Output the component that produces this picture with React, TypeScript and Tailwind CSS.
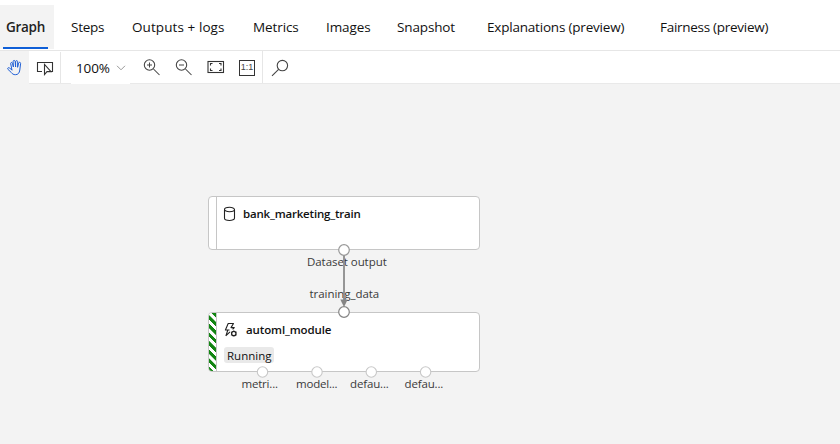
import React from "react";

const tabs = [
  { label: "Steps", box: "w-[61px]", text: "tracking-[-0.25px]" },
  { label: "Outputs + logs", box: "w-[121px]", text: "tracking-[0.08px]" },
  { label: "Metrics", box: "w-[73px]", text: "tracking-[-0.1px]" },
  { label: "Images", box: "w-[71px]", text: "tracking-[-0.1px]" },
  { label: "Snapshot", box: "w-[90px]", text: "tracking-[-0.14px]" },
  { label: "Explanations (preview)", box: "w-[173px]", text: "tracking-[-0.2px]" },
  { label: "Fairness (preview)", box: "w-[130px]", text: "tracking-[-0.28px]" },
];

function Hand() {
  return (
    <svg width="16" height="17" viewBox="0 0 16 17" fill="none" stroke="#1f5fd6" strokeWidth="1" strokeLinecap="round" strokeLinejoin="round">
      <path d="M4.900 10.800L3.700 4.700c-.3-1.400 1.500-1.700 1.800-.4L6.400 8 6.100 2.500c0-1.400 2-1.400 2.100 0L8.600 8V2.600c.1-1.300 2.100-1.300 2.100.1L10.600 8.300l1-4.200c.3-1.300 2.200-.9 2 .4l-.8 6.500c-.4 3-1.700 4.700-4.400 4.700-1.900 0-3-.7-4.100-2.200L.9 10.300c-.8-1.100.5-2.100 1.400-1.400l2.600 2" />
    </svg>
  );
}

function SelectBox() {
  return (
    <svg width="18" height="16" viewBox="0 0 18 16" fill="none" stroke="#333" strokeWidth="1.1">
      <path d="M6 11.500H1.500V2.500H16.500V11.500H14.500" />
      <path d="M8.500 4.500V14.500l2.500-2.900h4z" fill="#fff" />
    </svg>
  );
}

function Magnifier({ sign }: { sign: "plus" | "minus" }) {
  return (
    <svg width="18" height="18" viewBox="0 0 18 18" fill="none" stroke="#444" strokeWidth="1.05">
      <circle cx="6.500" cy="7" r="5.2" />
      <path d="M10.500 11l6 6M4 7h5" />
      {sign === "plus" && <path d="M6.500 4.500v5" />}
    </svg>
  );
}

function Toolbar() {
  return (
    <div className="flex h-[33px] border-b border-[#e9e9e9] bg-white">
      <div className="-mb-px flex w-[29px] items-center bg-[#f3f3f3] pl-[7px]"><Hand /></div>
      <div className="mt-px flex w-8 items-center border-r border-[#e6e6e6] pl-[7px]"><SelectBox /></div>
      <div className="-mb-px ml-[10px] flex w-[59px] items-center bg-white pl-[5px] text-[13.5px] text-[#111]">
        <span className="w-10 pt-[2px] tracking-[-0.15px]">100%</span>
        <svg width="10" height="6" viewBox="0 0 10 6" fill="none" stroke="#999"><path d="M1 .8l4 4 4-4" /></svg>
      </div>
      <div className="flex w-[133px] items-center border-r border-[#e6e6e6] pl-[13px]">
        <div className="w-8"><Magnifier sign="plus" /></div>
        <div className="w-8"><Magnifier sign="minus" /></div>
        <svg className="mr-[14px]" width="18" height="14" viewBox="0 0 18 14" fill="none" stroke="#333" strokeWidth="1.1">
          <rect x="1" y="1.5" width="15.5" height="11" />
          <path d="M3.5 5.5v-2h2M12 3.500h2v2M14 8.5v2h-2M5.5 10.5h-2v-2" />
        </svg>
        <div className="mt-px flex h-4 w-4 shrink-0 items-center justify-center border border-[#333] font-['Liberation_Sans',sans-serif] text-[9px] leading-none text-[#444]">1:1</div>
      </div>
      <div className="flex items-center pl-[8px] pt-px">
        <svg width="18" height="18" viewBox="0 0 18 18" fill="none" stroke="#444" strokeWidth="1.1">
          <circle cx="11.4" cy="6.6" r="5.2" />
          <path d="M7.6 10.4l-6.6 6.4" />
        </svg>
      </div>
    </div>
  );
}

function AutoMlIcon() {
  return (
    <svg width="14" height="16" viewBox="0 0 14 16" fill="none" stroke="#222" strokeWidth="1.1" strokeLinejoin="round">
      <path d="M5.500 8H1.4L4.2 1.5H9.5L7 5.6h3.3L8.6 7.4M3.8 8L2 13.6l4-3.8" />
      <circle cx="9.800" cy="11.500" r="2.200" strokeWidth="1.300" />
      <path d="M9.800 8.400v1M9.800 13.600v1M6.900 9.900l1 .6M11.600 12.500l1.100.6M6.900 13.100l1-.6M11.600 10.500l1.100-.6" strokeWidth="0.700" />
    </svg>
  );
}

const outputs = [
  { label: "metri...", x: 262.5, text: "left-[241.5px] top-[376px] tracking-[-0.2px]" },
  { label: "model...", x: 317, text: "left-[296px] top-[376px] tracking-[-0.2px]" },
  { label: "defau...", x: 371.3, text: "left-[350px] top-[376px] tracking-[-0.15px]" },
  { label: "defau...", x: 425.6, text: "left-[404.5px] top-[376px] tracking-[-0.15px]" },
];

export default function App() {
  return (
    <div className="relative flex h-[444px] w-[840px] flex-col overflow-hidden bg-[#f3f3f3] font-['Open_Sans','Noto_Sans',sans-serif] text-[#111]">
      <nav className="flex h-[51px] shrink-0 border-b border-[#e6e6e6] bg-white pt-[5px] text-[13.5px]">
        <div className="mr-[17px] flex h-11 w-[54px] flex-col bg-[#f3f3f3] pl-[3px]">
          <span className="h-[42px] pl-[3px] font-semibold leading-[45px] tracking-[-0.3px] text-[#222]">Graph</span>
          <span className="h-[2px] w-[45px] bg-[#0f5fd7]" />
        </div>
        {tabs.map((t) => (
          <div key={t.label} className={`${t.box} shrink-0 whitespace-nowrap leading-[45px]`}>
            <span className={t.text}>{t.label}</span>
          </div>
        ))}
      </nav>
      <Toolbar />

      <section className="absolute left-[208px] top-[196px] flex h-[54px] w-[272px] overflow-hidden rounded-[4px] border border-[#c6c6c6] bg-white">
        <div className="w-2 border-r border-[#c6c6c6]" />
        <div className="flex h-[34px] items-center pl-[6px]">
          <svg width="14" height="16" viewBox="0 0 14 16" fill="none" stroke="#222" strokeWidth="1.1">
            <ellipse cx="6.5" cy="3.5" rx="5" ry="2.2" />
            <path d="M1.5 3.5v8.8c0 1.2 2.2 2.2 5 2.2s5-1 5-2.2V3.500" />
          </svg>
          <span className="pl-[6px] text-[11.5px] font-semibold tracking-[-0.19px]">bank_marketing_train</span>
        </div>
      </section>

      <section className="absolute left-[208px] top-[312px] flex h-[60px] w-[272px] overflow-hidden rounded-[4px] border border-[#c6c6c6] bg-white">
        <div className="w-2 border-r border-[#c6c6c6] bg-[repeating-linear-gradient(45deg,#128512_0px,#128512_2.8px,#fff_3.2px,#fff_5.8px,#128512_6.1px)]" />
        <div className="flex flex-col pl-[7px]">
          <div className="flex h-[34px] items-center">
            <AutoMlIcon />
            <span className="pl-2 text-[11.5px] font-semibold tracking-[-0.12px]">automl_module</span>
          </div>
          <span className="flex h-4 w-[50px] items-center rounded-[3px] bg-[#e9e9e9] pl-[3px] pt-[2px] text-[11.5px]">Running</span>
        </div>
      </section>

      <span className="absolute left-[307px] top-[254px] whitespace-nowrap text-[11.5px] leading-4 tracking-[-0.06px] text-[#3a3a3a]">Dataset output</span>
      <span className="absolute left-[309.5px] top-[286px] whitespace-nowrap text-[11.5px] leading-4 tracking-[-0.05px] text-[#3a3a3a]">training_data</span>
      {outputs.map((o, i) => (
        <span key={i} className={`absolute whitespace-nowrap text-[11.5px] leading-4 text-[#3a3a3a] ${o.text}`}>{o.label}</span>
      ))}

      <svg className="absolute left-0 top-0" width="840" height="444" viewBox="0 0 840 444">
        <path d="M344 255V304" stroke="#858585" strokeWidth="1.7" />
        <path d="M340.300 299.500h7.400L344 307z" fill="#858585" />
        <circle cx="344" cy="250" r="5.300" fill="#fff" stroke="#999" strokeWidth="1.200" />
        <circle cx="344" cy="312" r="5.300" fill="#fff" stroke="#858585" strokeWidth="1.200" />
        {outputs.map((o) => (
          <circle key={o.x} cx={o.x} cy="372" r="5.200" fill="#fff" stroke="#c8c8c8" strokeWidth="1.100" />
        ))}
      </svg>
    </div>
  );
}
